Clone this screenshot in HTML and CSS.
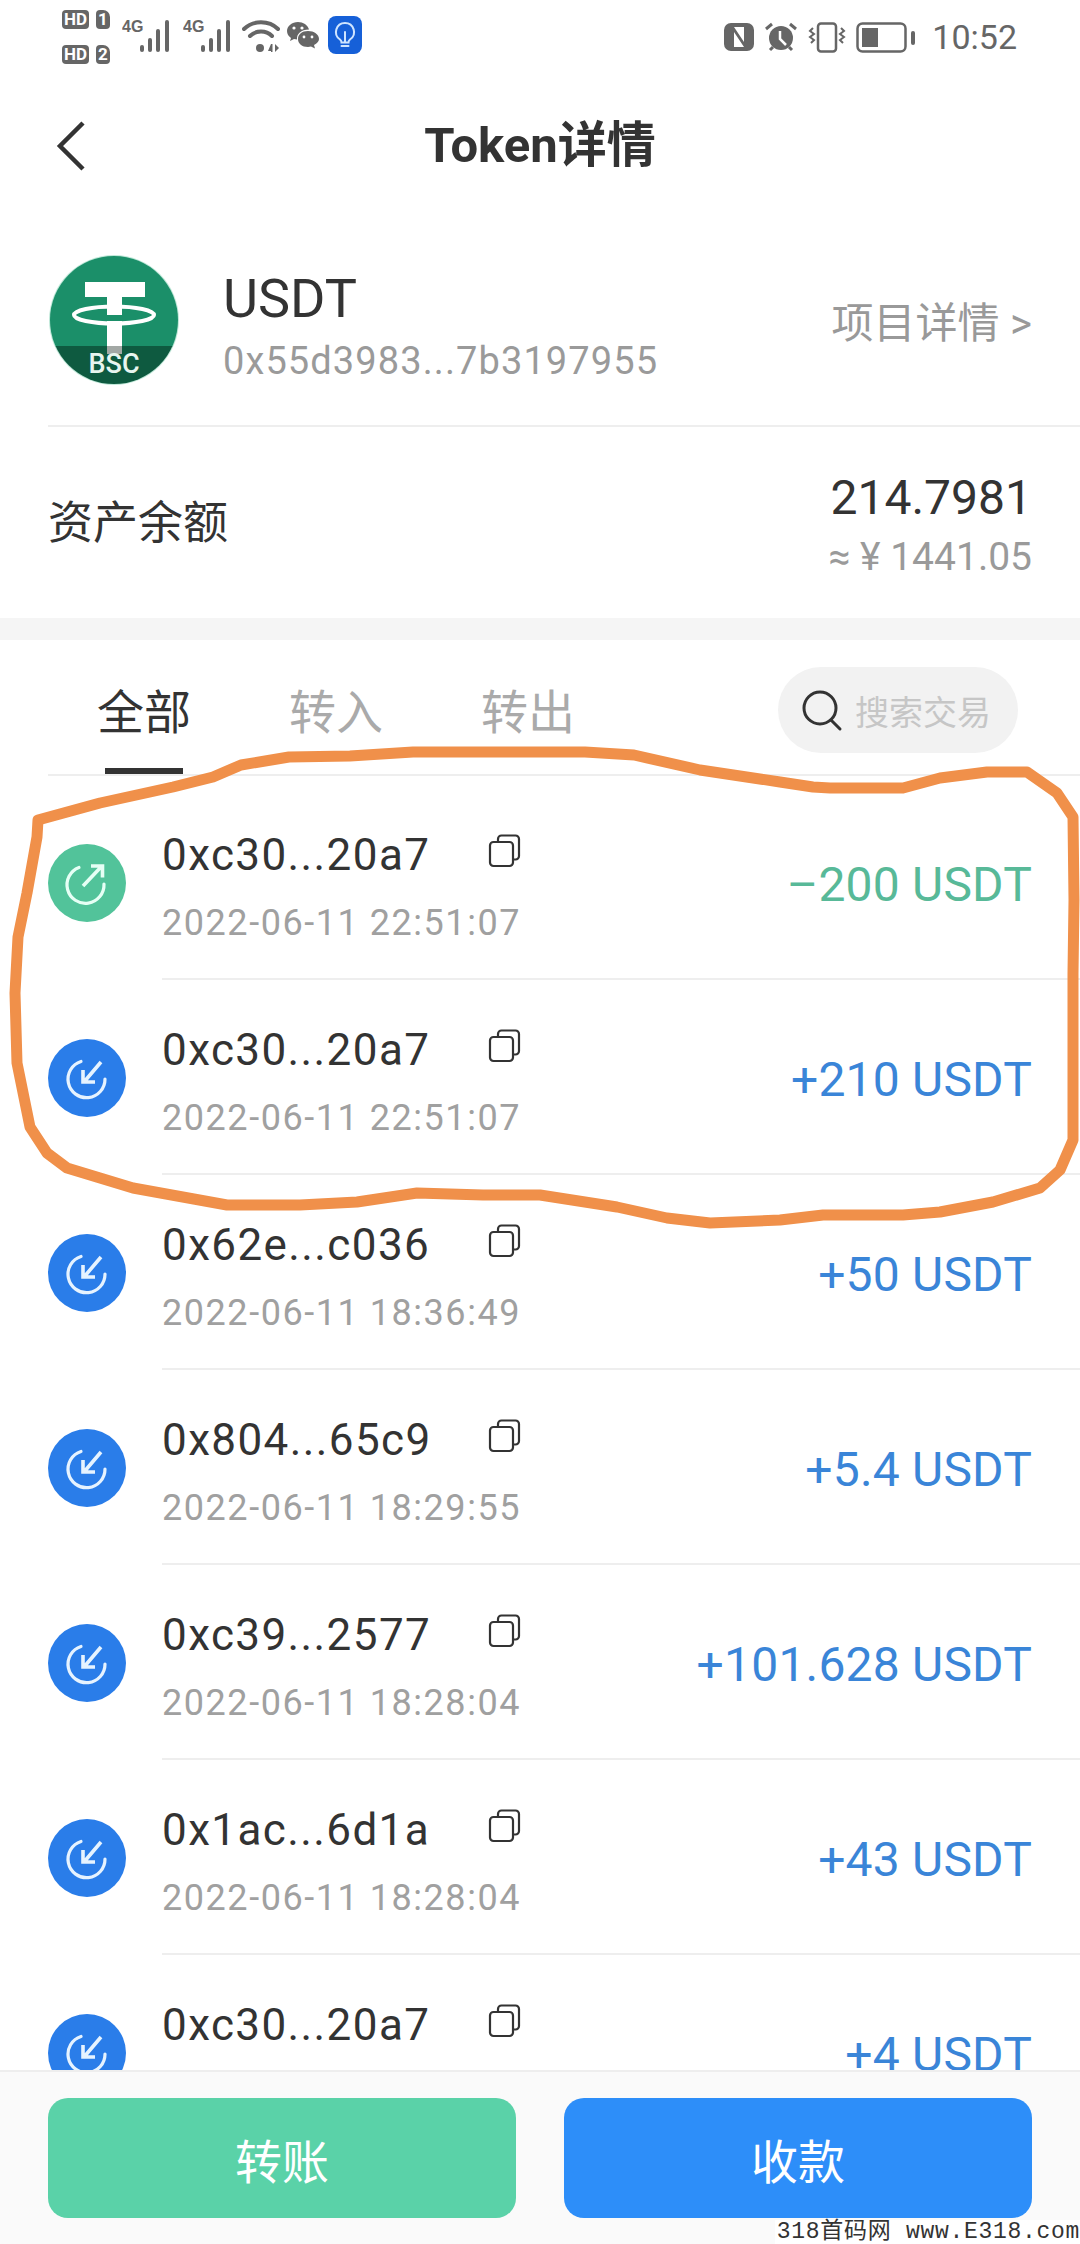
FILE: index.html
```html
<!DOCTYPE html>
<html lang="zh">
<head>
<meta charset="utf-8">
<title>Token详情</title>
<link rel="stylesheet" href="styles.css">
</head>
<body>
<div class="page">
  <div class="status">
    <div class="status-left">
      <div class="sims">
        <div class="sim"><span class="hd">HD</span><span class="num">1</span></div>
        <div class="sim"><span class="hd">HD</span><span class="num">2</span></div>
      </div>
      <svg class="sig" width="50" height="34" viewBox="0 0 50 34"><text x="0" y="13" class="tiny">4G</text><g fill="#666"><rect x="18" y="26" width="4" height="7" rx="2"/><rect x="26" y="19" width="4" height="14" rx="2"/><rect x="34" y="10" width="4" height="23" rx="2"/><rect x="43" y="1" width="4" height="32" rx="2"/></g></svg>
      <svg class="sig" width="50" height="34" viewBox="0 0 50 34"><text x="0" y="13" class="tiny">4G</text><g fill="#666"><rect x="18" y="26" width="4" height="7" rx="2"/><rect x="26" y="19" width="4" height="14" rx="2"/><rect x="34" y="10" width="4" height="23" rx="2"/><rect x="43" y="1" width="4" height="32" rx="2"/></g></svg>
      <svg class="wifi" width="40" height="34" viewBox="0 0 40 34"><g fill="none" stroke="#666" stroke-width="4" stroke-linecap="round"><path d="M2 10C11 1 27 1 36 10"/><path d="M8 17C14 11 24 11 30 17"/></g><circle cx="18" cy="29" r="4" fill="#666"/><path d="M26 32l3-7v7zM33 25v8l4-4z" fill="#666"/><rect x="29" y="25" width="1.5" height="8" fill="#666"/></svg>
      <svg class="wechat" width="32" height="28" viewBox="0 0 32 28"><path d="M11 1C5 1 0 5 0 10c0 3 1.500 5 4 7l-1 3 4-2c1 .3 2 .4 3 .4C9.500 13 14 8.500 22 8.500 21 4 16 1 11 1z" fill="#666"/><path d="M21 10c-6 0-10 3.500-10 8s4 8 10 8c1 0 2-.1 3-.4l4 2-1-3.500c3-1.500 5-3.800 5-6.100 0-4.500-5-8-11-8z" fill="#666"/><g fill="#fff"><circle cx="7" cy="7" r="1.600"/><circle cx="15" cy="7" r="1.600"/><circle cx="17" cy="16" r="1.400"/><circle cx="25" cy="16" r="1.400"/></g></svg>
      <svg class="bulb" width="34" height="38" viewBox="0 0 34 38"><rect width="34" height="38" rx="8" fill="#1660d8"/><path d="M17 7a9 9 0 0 0-5 16.500c1 .8 1.500 1.500 1.500 3h7c0-1.500.5-2.200 1.500-3A9 9 0 0 0 17 7zM13.500 30h7M17 16v10" fill="none" stroke="#cfe5ff" stroke-width="2" stroke-linecap="round"/></svg>
    </div>
    <div class="status-right">
      <svg width="30" height="28" viewBox="0 0 30 28"><rect width="30" height="28" rx="7" fill="#666"/><rect x="6" y="4" width="18" height="20" fill="#fff"/><path d="M6 4h4l10 15V4h4v20h-4L10 9v15H6z" fill="#666"/></svg>
      <svg width="34" height="30" viewBox="0 0 34 30"><circle cx="17" cy="16" r="12" fill="#666"/><path d="M16 9v8l6 6" fill="none" stroke="#fff" stroke-width="2.500"/><path d="M2 7l6-5M32 7l-6-5M6 28l3-3M28 28l-3-3" stroke="#666" stroke-width="3" fill="none"/></svg>
      <svg width="38" height="31" viewBox="0 0 38 31"><rect x="10" y="1.500" width="18" height="28" rx="3" fill="none" stroke="#666" stroke-width="2.500"/><path d="M5 6l-3 3 4 3-4 3 4 3-3 3M33 6l3 3-4 3 4 3-4 3 3 3" fill="none" stroke="#666" stroke-width="2"/></svg>
      <svg width="60" height="31" viewBox="0 0 60 31"><rect x="1.500" y="1.500" width="48" height="28" rx="5" fill="none" stroke="#666" stroke-width="2.500"/><rect x="6" y="6" width="16" height="19" fill="#666"/><rect x="55" y="9" width="4" height="14" rx="2" fill="#666"/></svg>
      <span class="time">10:52</span>
    </div>
  </div>

  <div class="nav">
    <svg class="back" width="30" height="50" viewBox="0 0 30 50"><path d="M27 2L4 25l23 23" fill="none" stroke="#333" stroke-width="4.500"/></svg>
    <div class="title">Token详情</div>
    <div></div>
  </div>

  <div class="token">
    <svg class="logo" width="132" height="130" viewBox="0 0 132 130">
      <defs><clipPath id="lc"><circle cx="66" cy="65" r="64"/></clipPath></defs>
      <circle cx="66" cy="65" r="65" fill="#bfe8d8"/>
      <g clip-path="url(#lc)">
        <rect width="132" height="92" fill="#1b8f69"/>
        <rect y="91" width="132" height="40" fill="#0e5a40"/>
      </g>
      <path d="M37 27h60v15H74v18H59V42H37zM59 66h15v25H59z" fill="#fff"/>
      <rect x="59" y="91" width="15" height="8" fill="#a3a8a5"/>
      <ellipse cx="66" cy="60" rx="40" ry="8.500" fill="none" stroke="#fff" stroke-width="4"/>
      <text x="66" y="118" class="bsc">BSC</text>
    </svg>
    <div class="token-info">
      <div class="token-name">USDT</div>
      <div class="token-addr">0x55d3983...7b3197955</div>
    </div>
    <div class="token-link">项目详情 &gt;</div>
  </div>

  <div class="balance">
    <div class="balance-label">资产余额</div>
    <div class="balance-vals">
      <div class="balance-num">214.7981</div>
      <div class="balance-cny">≈ ¥ 1441.05</div>
    </div>
  </div>

  <div class="band"></div>

  <div class="tabs">
    <div class="tab tab-active">全部</div>
    <div class="tab">转入</div>
    <div class="tab">转出</div>
    <div class="search">
      <svg width="44" height="44" viewBox="0 0 44 44"><circle cx="20" cy="20" r="16" fill="none" stroke="#333" stroke-width="3"/><path d="M31 32l9 9" stroke="#333" stroke-width="3" stroke-linecap="round"/></svg>
      <span>搜索交易</span>
    </div>
  </div>

  <div class="list">
    <div class="row">
      <svg class="tx" width="78" height="78" viewBox="0 0 78 78"><circle cx="39" cy="39" r="39" fill="#52c39a"/><path d="M31 23.500A18.500 18.500 0 1 0 56 40" fill="none" stroke="#e6fff5" stroke-width="3.200" stroke-linecap="round"/><path d="M35 42l18-19M43 22h11.500v11.500" fill="none" stroke="#e6fff5" stroke-width="3.600"/></svg>
      <div class="tx-main">
        <div class="tx-top"><span class="addr">0xc30...20a7</span><svg class="copy" width="34" height="34" viewBox="0 0 34 34"><path d="M10 7V5a3.500 3.500 0 0 1 3.500-3.500h14A3.500 3.500 0 0 1 31 5v17a3.500 3.500 0 0 1-3.500 3.500H25" fill="none" stroke="#333" stroke-width="2.200"/><rect x="2" y="8" width="23" height="24" rx="3.500" fill="none" stroke="#333" stroke-width="2.200"/></svg></div>
        <div class="date">2022-06-11 22:51:07</div>
      </div>
      <div class="amt amt-out">–200 USDT</div>
    </div>
    <div class="row">
      <svg class="tx" width="78" height="78" viewBox="0 0 78 78"><circle cx="39" cy="39" r="39" fill="#2a7de9"/><path d="M33 22.500A18.500 18.500 0 1 0 57 40" fill="none" stroke="#e6f3ff" stroke-width="3.200" stroke-linecap="round"/><path d="M53 23L36 43M35 31v12h12" fill="none" stroke="#e6f3ff" stroke-width="3.600"/></svg>
      <div class="tx-main">
        <div class="tx-top"><span class="addr">0xc30...20a7</span><svg class="copy" width="34" height="34" viewBox="0 0 34 34"><path d="M10 7V5a3.500 3.500 0 0 1 3.500-3.500h14A3.500 3.500 0 0 1 31 5v17a3.500 3.500 0 0 1-3.500 3.500H25" fill="none" stroke="#333" stroke-width="2.200"/><rect x="2" y="8" width="23" height="24" rx="3.500" fill="none" stroke="#333" stroke-width="2.200"/></svg></div>
        <div class="date">2022-06-11 22:51:07</div>
      </div>
      <div class="amt">+210 USDT</div>
    </div>
    <div class="row">
      <svg class="tx" width="78" height="78" viewBox="0 0 78 78"><circle cx="39" cy="39" r="39" fill="#2a7de9"/><path d="M33 22.500A18.500 18.500 0 1 0 57 40" fill="none" stroke="#e6f3ff" stroke-width="3.200" stroke-linecap="round"/><path d="M53 23L36 43M35 31v12h12" fill="none" stroke="#e6f3ff" stroke-width="3.600"/></svg>
      <div class="tx-main">
        <div class="tx-top"><span class="addr">0x62e...c036</span><svg class="copy" width="34" height="34" viewBox="0 0 34 34"><path d="M10 7V5a3.500 3.500 0 0 1 3.500-3.500h14A3.500 3.500 0 0 1 31 5v17a3.500 3.500 0 0 1-3.500 3.500H25" fill="none" stroke="#333" stroke-width="2.200"/><rect x="2" y="8" width="23" height="24" rx="3.500" fill="none" stroke="#333" stroke-width="2.200"/></svg></div>
        <div class="date">2022-06-11 18:36:49</div>
      </div>
      <div class="amt">+50 USDT</div>
    </div>
    <div class="row">
      <svg class="tx" width="78" height="78" viewBox="0 0 78 78"><circle cx="39" cy="39" r="39" fill="#2a7de9"/><path d="M33 22.500A18.500 18.500 0 1 0 57 40" fill="none" stroke="#e6f3ff" stroke-width="3.200" stroke-linecap="round"/><path d="M53 23L36 43M35 31v12h12" fill="none" stroke="#e6f3ff" stroke-width="3.600"/></svg>
      <div class="tx-main">
        <div class="tx-top"><span class="addr">0x804...65c9</span><svg class="copy" width="34" height="34" viewBox="0 0 34 34"><path d="M10 7V5a3.500 3.500 0 0 1 3.500-3.500h14A3.500 3.500 0 0 1 31 5v17a3.500 3.500 0 0 1-3.500 3.500H25" fill="none" stroke="#333" stroke-width="2.200"/><rect x="2" y="8" width="23" height="24" rx="3.500" fill="none" stroke="#333" stroke-width="2.200"/></svg></div>
        <div class="date">2022-06-11 18:29:55</div>
      </div>
      <div class="amt">+5.4 USDT</div>
    </div>
    <div class="row">
      <svg class="tx" width="78" height="78" viewBox="0 0 78 78"><circle cx="39" cy="39" r="39" fill="#2a7de9"/><path d="M33 22.500A18.500 18.500 0 1 0 57 40" fill="none" stroke="#e6f3ff" stroke-width="3.200" stroke-linecap="round"/><path d="M53 23L36 43M35 31v12h12" fill="none" stroke="#e6f3ff" stroke-width="3.600"/></svg>
      <div class="tx-main">
        <div class="tx-top"><span class="addr">0xc39...2577</span><svg class="copy" width="34" height="34" viewBox="0 0 34 34"><path d="M10 7V5a3.500 3.500 0 0 1 3.500-3.500h14A3.500 3.500 0 0 1 31 5v17a3.500 3.500 0 0 1-3.500 3.500H25" fill="none" stroke="#333" stroke-width="2.200"/><rect x="2" y="8" width="23" height="24" rx="3.500" fill="none" stroke="#333" stroke-width="2.200"/></svg></div>
        <div class="date">2022-06-11 18:28:04</div>
      </div>
      <div class="amt">+101.628 USDT</div>
    </div>
    <div class="row">
      <svg class="tx" width="78" height="78" viewBox="0 0 78 78"><circle cx="39" cy="39" r="39" fill="#2a7de9"/><path d="M33 22.500A18.500 18.500 0 1 0 57 40" fill="none" stroke="#e6f3ff" stroke-width="3.200" stroke-linecap="round"/><path d="M53 23L36 43M35 31v12h12" fill="none" stroke="#e6f3ff" stroke-width="3.600"/></svg>
      <div class="tx-main">
        <div class="tx-top"><span class="addr">0x1ac...6d1a</span><svg class="copy" width="34" height="34" viewBox="0 0 34 34"><path d="M10 7V5a3.500 3.500 0 0 1 3.500-3.500h14A3.500 3.500 0 0 1 31 5v17a3.500 3.500 0 0 1-3.500 3.500H25" fill="none" stroke="#333" stroke-width="2.200"/><rect x="2" y="8" width="23" height="24" rx="3.500" fill="none" stroke="#333" stroke-width="2.200"/></svg></div>
        <div class="date">2022-06-11 18:28:04</div>
      </div>
      <div class="amt">+43 USDT</div>
    </div>
    <div class="row">
      <svg class="tx" width="78" height="78" viewBox="0 0 78 78"><circle cx="39" cy="39" r="39" fill="#2a7de9"/><path d="M33 22.500A18.500 18.500 0 1 0 57 40" fill="none" stroke="#e6f3ff" stroke-width="3.200" stroke-linecap="round"/><path d="M53 23L36 43M35 31v12h12" fill="none" stroke="#e6f3ff" stroke-width="3.600"/></svg>
      <div class="tx-main">
        <div class="tx-top"><span class="addr">0xc30...20a7</span><svg class="copy" width="34" height="34" viewBox="0 0 34 34"><path d="M10 7V5a3.500 3.500 0 0 1 3.500-3.500h14A3.500 3.500 0 0 1 31 5v17a3.500 3.500 0 0 1-3.500 3.500H25" fill="none" stroke="#333" stroke-width="2.200"/><rect x="2" y="8" width="23" height="24" rx="3.500" fill="none" stroke="#333" stroke-width="2.200"/></svg></div>
        <div class="date">2022-06-11 18:28:04</div>
      </div>
      <div class="amt">+4 USDT</div>
    </div>
  </div>

  <div class="footer">
    <div class="btn btn-send">转账</div>
    <div class="btn btn-recv">收款</div>
  </div>

  <svg class="scribble" width="1080" height="2244" viewBox="0 0 1080 2244"><path d="M38 820L100 803 173 787 213 777 241 765 289 757 350 756 413 752 585 752 634 755 700 770 780 782 813 787 830 788 903 788 940 778 987 772 1027 772 1057 793 1073 817 1074 900 1073 973 1073 1140 1060 1170 1040 1188 993 1202 940 1212 903 1215 823 1215 780 1220 710 1223 667 1218 617 1207 540 1195 483 1195 417 1193 357 1202 300 1205 227 1205 133 1188 67 1168 47 1153 30 1127 17 1063 15 993 18 937 27 893 37 837Z" fill="none" stroke="#f0904a" stroke-width="11" stroke-linejoin="round"/></svg>
  <div class="watermark">318首码网 www.E318.com</div>
</div>
</body>
</html>
```
FILE: styles.css
```css
* { box-sizing: border-box; }
html, body { margin: 0; padding: 0; }
body {
  font-family: Roboto, "Noto Sans CJK SC", sans-serif;
  color: #333;
  background: #fff;
}
.page {
  position: relative;
  width: 1080px;
  height: 2244px;
  display: flex;
  flex-direction: column;
  overflow: hidden;
  background: #fff;
}

/* status bar */
.status {
  height: 70px;
  flex: none;
  display: flex;
  justify-content: space-between;
  align-items: center;
  padding: 0 63px 0 62px;
}
.status-left, .status-right { display: flex; align-items: center; }
.status-left { gap: 9px; }
.status-right { gap: 10px; padding-top: 4px; }
.sims { display: flex; flex-direction: column; gap: 16px; padding-top: 4px; margin-right: 3px; }
.sim { display: flex; gap: 7px; height: 19px; }
.hd, .num {
  background: #666;
  color: #fff;
  font-size: 17px;
  font-weight: 700;
  line-height: 19px;
  border-radius: 4px;
  text-align: center;
}
.hd { width: 27px; }
.num { width: 14px; border-top-right-radius: 7px; }
.tiny { font: 700 16px "Liberation Sans Narrow", "Liberation Sans", sans-serif; fill: #666; }
.sig { margin-top: 2px; }
.sig + .sig { margin-left: 2px; }
.wifi { margin-top: 2px; }
.wechat { margin-left: -4px; }
.time { font-size: 34px; color: #666; margin-left: 6px; line-height: 40px; }

/* nav */
.nav {
  height: 152px;
  flex: none;
  display: grid;
  grid-template-columns: 1fr auto 1fr;
  align-items: center;
  padding: 0 48px;
}
.back { margin-left: 8px; }
.title { font-size: 49px; font-weight: 700; line-height: 60px; }

/* token */
.token {
  height: 205px;
  flex: none;
  margin-left: 48px;
  padding: 0 48px 7px 0;
  display: flex;
  align-items: center;
  border-bottom: 2px solid #eee;
}
.logo { flex: none; }
.token-info { margin-left: 43px; flex: 1; padding-top: 12px; }
.token-name { font-size: 54px; line-height: 62px; color: #333; }
.token-addr { font-size: 38px; line-height: 46px; margin-top: 8px; color: #9a9a9a; letter-spacing: 1.1px; }
.token-link { font-size: 42px; color: #999; line-height: 50px; padding-top: 8px; }

/* balance */
.balance {
  height: 191px;
  flex: none;
  padding: 0 48px 0 48px;
  display: flex;
  justify-content: space-between;
  align-items: center;
}
.balance-label { font-size: 45px; line-height: 56px; padding-top: 2px; }
.balance-vals { text-align: right; padding-top: 6px; }
.balance-num { font-size: 48px; line-height: 56px; }
.balance-cny { font-size: 39px; line-height: 48px; margin-top: 7px; color: #9a9a9a; }
.band { height: 22px; flex: none; background: #f5f5f5; }

/* tabs */
.tabs {
  height: 136px;
  flex: none;
  margin-left: 48px;
  padding: 43px 62px 0 49px;
  display: flex;
  gap: 98px;
  border-bottom: 2px solid #eee;
  position: relative;
}
.tab { font-size: 47px; line-height: 60px; color: #aaa; display: flex; flex-direction: column; align-items: center; }
.tab-active { color: #333; }
.tab-active::after {
  content: "";
  width: 78px;
  height: 6px;
  margin-top: 25px;
  background: #333;
}
.search {
  margin: -16px 0 0 auto;
  width: 240px;
  height: 86px;
  border-radius: 43px;
  background: #f2f2f2;
  display: flex;
  align-items: center;
  gap: 11px;
  padding-left: 22px;
  color: #c6c6c6;
  font-size: 34px;
}

/* list */
.list {
  flex: 1;
  min-height: 0;
  overflow: hidden;
  padding-top: 9px;
}
.row {
  height: 195px;
  padding: 0 48px;
  display: flex;
  align-items: center;
  position: relative;
}
.row::after {
  content: "";
  position: absolute;
  left: 162px;
  right: 0;
  bottom: 0;
  height: 2px;
  background: #eee;
}
.tx { flex: none; }
.tx-main {
  margin-left: 36px;
  align-self: flex-start;
  padding-top: 44px;
  width: 360px;
}
.tx-top { display: flex; justify-content: space-between; height: 52px; }
.addr { font-size: 44px; line-height: 52px; color: #333; letter-spacing: 1.4px; white-space: nowrap; }
.copy { margin-top: 5px; }
.date { margin-top: 22px; font-size: 36px; line-height: 40px; color: #a0a0a0; letter-spacing: 1.55px; white-space: nowrap; }
.amt { margin-left: auto; padding-top: 5px; font-size: 48px; line-height: 56px; letter-spacing: .2px; color: #3a85d8; white-space: nowrap; }
.amt-out { color: #58b998; }

/* footer */
.footer {
  height: 174px;
  flex: none;
  background: #fafafa;
  border-top: 2px solid #eee;
  padding: 26px 48px 26px;
  display: flex;
  gap: 48px;
  position: relative;
}
.btn {
  flex: 1;
  height: 120px;
  border-radius: 20px;
  color: #fff;
  font-size: 47px;
  display: flex;
  align-items: center;
  justify-content: center;
}
.btn-send { background: #5ad2a8; }
.btn-recv { background: #2d8ef9; }

/* overlays */
.scribble { position: absolute; left: 0; top: 0; pointer-events: none; }
.watermark {
  position: absolute;
  right: 0;
  bottom: 0;
  height: 24px;
  padding-left: 2px;
  background: #fff;
  font: 23px/24px "Liberation Mono", "Noto Sans CJK SC", monospace;
  letter-spacing: .7px;
  color: #333;
  white-space: nowrap;
}
.bsc { font: 500 27px Roboto, sans-serif; fill: #e8f5ef; text-anchor: middle; }
```
